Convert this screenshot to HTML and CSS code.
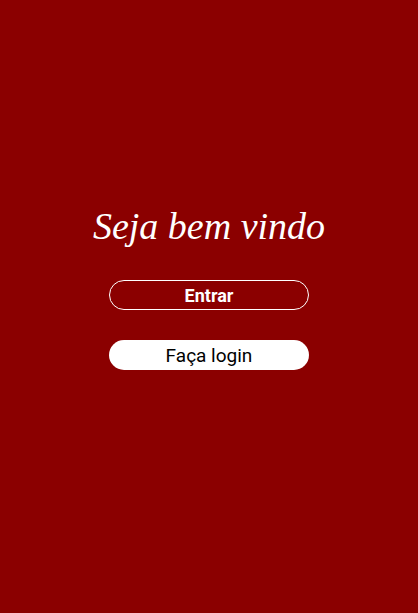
FILE: index.html
```html
<!DOCTYPE html>
<html lang="pt">
<head>
<meta charset="utf-8">
<link rel="stylesheet" href="styles.css">
<title>Seja bem vindo</title>
</head>
<body>
<main class="welcome">
  <h1 class="title">Seja bem vindo</h1>
  <button class="btn btn-outline">Entrar</button>
  <button class="btn btn-solid">Faça login</button>
</main>
</body>
</html>
```
FILE: styles.css
```css
html, body {
  margin: 0;
  padding: 0;
  height: 100%;
}
body {
  background: #8b0000;
  font-family: Roboto, "Liberation Sans", sans-serif;
}
.welcome {
  display: flex;
  flex-direction: column;
  align-items: center;
  padding-top: 202px;
}
.title {
  margin: 0;
  font-family: "Liberation Serif", "DejaVu Serif", serif;
  font-style: italic;
  font-weight: 400;
  font-size: 38px;
  line-height: 48px;
  color: #fff;
}
.btn {
  width: 200px;
  height: 30px;
  border-radius: 15px;
  font-family: Roboto, sans-serif;
  font-size: 18px;
  padding: 0;
  cursor: pointer;
}
.btn-outline {
  margin-top: 30px;
  background: transparent;
  border: 1px solid #fff;
  color: #fff;
  font-weight: 700;
}
.btn-solid {
  margin-top: 30px;
  background: #fff;
  border: none;
  color: #000;
  font-weight: 400;
  font-size: 19px;
}
```
